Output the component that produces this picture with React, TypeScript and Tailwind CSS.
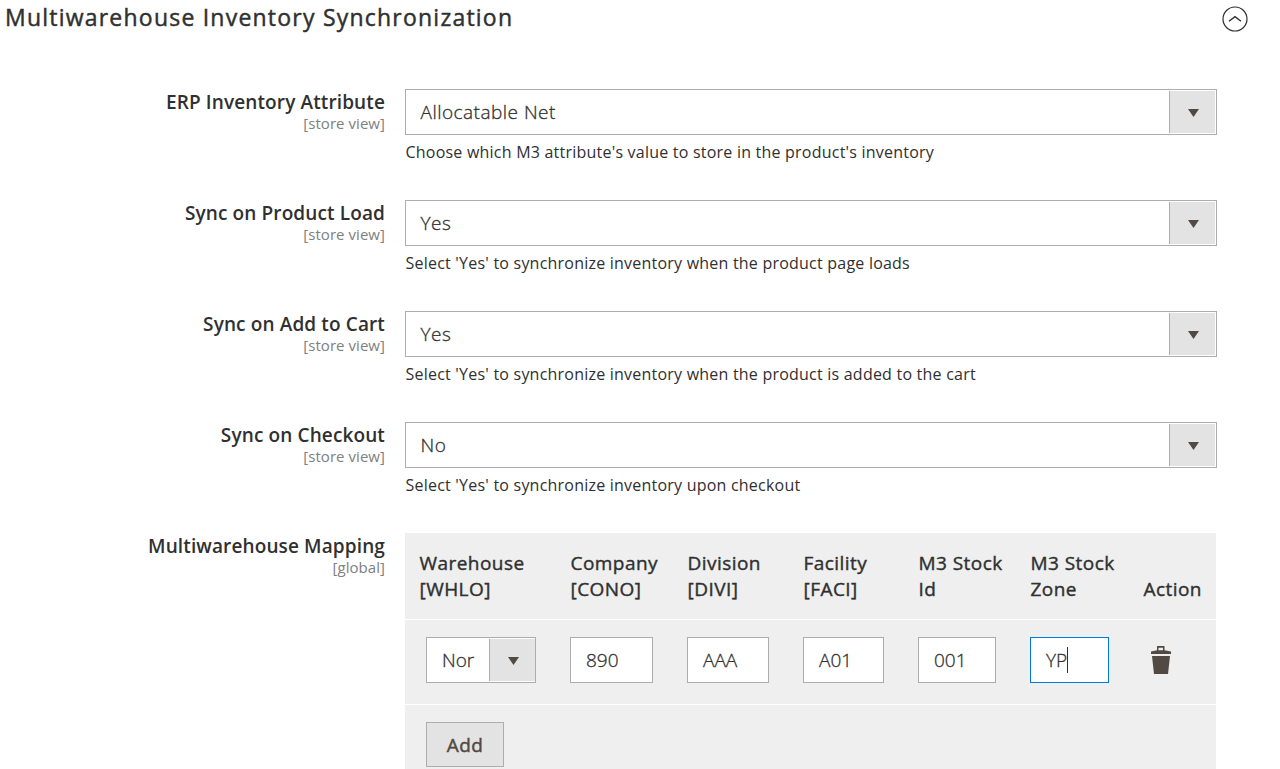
import React from 'react';

function Arrow() {
  return (
    <span className="my-px mr-px flex w-[46px] shrink-0 items-center justify-center border-l border-[#adadad] bg-[#e3e3e3] pt-px pl-[2px]">
      <svg width="11" height="8" viewBox="0 0 11 8">
        <path d="M0 0h11L5.5 8z" fill="#514943" />
      </svg>
    </span>
  );
}

function Label({ text, scope }: { text: string; scope: string }) {
  return (
    <div className="w-[385px] shrink-0 text-right">
      <div className="h-[24px] text-[19px] leading-[26px] font-semibold tracking-[0.12px]">{text}</div>
      <div className="text-[15px] leading-[20px] tracking-[0.05px] text-[#808080]">{scope}</div>
    </div>
  );
}

function Field({ label, value, note }: { label: string; value: string; note: string }) {
  return (
    <div className="flex h-[111px]">
      <Label text={label} scope="[store view]" />
      <div className="ml-[20px] w-[812px]">
        <div className="flex h-[46px] border border-[#adadad] bg-white">
          <span className="flex-1 pl-[14.5px] text-[19px] leading-[44px] font-light tracking-[0.48px] [-webkit-text-stroke:0.3px_#303030]">{value}</span>
          <Arrow />
        </div>
        <p className="mt-[6px] pl-[0.5px] text-[16px] leading-[23px] tracking-[0.22px] whitespace-nowrap">{note}</p>
      </div>
    </div>
  );
}

const headings = [
  ['Warehouse', '[WHLO]'],
  ['Company', '[CONO]'],
  ['Division', '[DIVI]'],
  ['Facility', '[FACI]'],
  ['M3 Stock', 'Id'],
  ['M3 Stock', 'Zone'],
  ['Action'],
];

const inputs = [
  { value: '890', box: 'w-[83px] border-[#adadad]' },
  { value: 'AAA', box: 'w-[82px] border-[#adadad]' },
  { value: 'A01', box: 'w-[81px] border-[#adadad]' },
  { value: '001', box: 'w-[78px] border-[#adadad]' },
  { value: 'YP', box: 'w-[79px] border-[#007bdb]', focused: true },
];

const columns = 'grid grid-cols-[151px_117px_116px_115px_112px_113px_87px] border-b border-white';

export default function App() {
  return (
    <main className="h-[769px] w-[1280px] overflow-hidden bg-white font-['Open_Sans',sans-serif] text-[#303030]">
      <header className="flex h-[89px] justify-between pr-[32px] pl-[5px]">
        <h1 className="text-[23px] leading-[34px] tracking-[1.22px] [-webkit-text-stroke:0.45px_#303030]">Multiwarehouse Inventory Synchronization</h1>
        <svg className="mt-[6px]" width="26" height="26" viewBox="0 0 26 26" fill="none" stroke="#303030">
          <circle cx="13" cy="13" r="12" strokeWidth="1.2" />
          <path d="M7 15.3l6-4.6 6 4.6" strokeWidth="1.4" />
        </svg>
      </header>
      <Field label="ERP Inventory Attribute" value="Allocatable Net" note="Choose which M3 attribute's value to store in the product's inventory" />
      <Field label="Sync on Product Load" value="Yes" note="Select 'Yes' to synchronize inventory when the product page loads" />
      <Field label="Sync on Add to Cart" value="Yes" note="Select 'Yes' to synchronize inventory when the product is added to the cart" />
      <Field label="Sync on Checkout" value="No" note="Select 'Yes' to synchronize inventory upon checkout" />
      <div className="flex">
        <Label text="Multiwarehouse Mapping" scope="[global]" />
        <section className="ml-[20px] h-[236px] w-[811px] bg-[#efefef]">
          <div className={`${columns} h-[87px] items-end pb-[17px] text-[19px] leading-[26px] tracking-[0.45px] [-webkit-text-stroke:0.4px_#303030]`}>
            {headings.map((lines, i) => (
              <div key={i} className="pl-[14.5px] whitespace-nowrap">
                {lines.map((line) => (
                  <div key={line}>{line}</div>
                ))}
              </div>
            ))}
          </div>
          <div className={`${columns} h-[85px] pt-[17px] text-[19px] leading-[44px] font-light`}>
            <div className="pl-[21px]">
              <div className="flex h-[46px] w-[110px] border border-[#adadad] bg-white">
                <span className="w-[62px] shrink-0 pl-[15px] [-webkit-text-stroke:0.3px_#303030]">Nor</span>
                <Arrow />
              </div>
            </div>
            {inputs.map(({ value, box, focused }) => (
              <div key={value} className="pl-[14px]">
                <div className={`${box} flex h-[46px] items-center border bg-white pl-[15px] [-webkit-text-stroke:0.3px_#303030]`}>
                  <span>{value}</span>
                  {focused && <span className="h-[26px] w-px bg-[#303030]" />}
                </div>
              </div>
            ))}
            <div className="pt-[9px] pl-[21px]">
              <svg width="22" height="28" viewBox="0 0 22 28" fill="#514943">
                <path d="M1 8V5.5L7 4.3V0h7.5v4.3L21 5.5V8zM8.5 4.3H13V1.8H8.5z" fillRule="evenodd" />
                <path d="M2 10h18l-2 18H4z" />
              </svg>
            </div>
          </div>
          <div className="pt-[17px] pl-[21px]">
            <button className="h-[45px] w-[78px] border border-[#adadad] bg-[#e3e3e3] pt-px text-[19px] tracking-[0.48px] text-[#514943] [-webkit-text-stroke:0.45px_#514943]">Add</button>
          </div>
        </section>
      </div>
    </main>
  );
}
